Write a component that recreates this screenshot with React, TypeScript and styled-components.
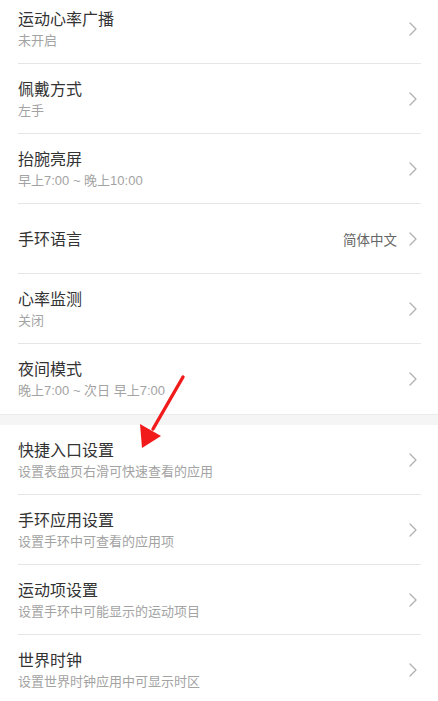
import React from "react";
import styled, { createGlobalStyle } from "styled-components";

const GlobalStyle = createGlobalStyle`
  html, body {
    margin: 0;
    padding: 0;
    background: #ffffff;
  }
  body {
    font-family: "Liberation Sans", "Noto Sans CJK SC", sans-serif;
    -webkit-font-smoothing: antialiased;
  }
`;

const Page = styled.div`
  position: relative;
  width: 438px;
  height: 701px;
  overflow: hidden;
  background: #ffffff;
`;

const List = styled.div`
  display: flex;
  flex-direction: column;
  margin-top: -6px;
`;

const Group = styled.div`
  display: flex;
  flex-direction: column;
`;

const Gap = styled.div`
  height: 10px;
  background: #f5f5f5;
  border-top: 1px solid #ebebeb;
`;

const Row = styled.div<{ $last?: boolean }>`
  display: flex;
  align-items: center;
  height: 70px;
  margin: 0 17px 0 18px;
  box-sizing: border-box;
  border-bottom: ${(p) => (p.$last ? "none" : "1px solid #e6e6e6")};
`;

const Texts = styled.div`
  flex: 1;
  display: flex;
  flex-direction: column;
  padding-top: 1px;
`;

const Title = styled.div`
  font-size: 16px;
  line-height: 21px;
  color: #333333;
`;

const Sub = styled.div`
  font-size: 13px;
  line-height: 19px;
  color: #a3a3a3;
  margin-top: 1px;
`;

const Value = styled.span`
  font-size: 13.5px;
  color: #666666;
  margin-right: 12px;
`;

const Chevron = styled.svg`
  width: 8px;
  height: 14px;
  margin-right: 4px;
  flex-shrink: 0;
`;

const ArrowOverlay = styled.svg`
  position: absolute;
  left: 0;
  top: 0;
  pointer-events: none;
`;

type Item = { title: string; sub?: string; value?: string };

const firstGroup: Item[] = [
  { title: "运动心率广播", sub: "未开启" },
  { title: "佩戴方式", sub: "左手" },
  { title: "抬腕亮屏", sub: "早上7:00 ~ 晚上10:00" },
  { title: "手环语言", value: "简体中文" },
  { title: "心率监测", sub: "关闭" },
  { title: "夜间模式", sub: "晚上7:00 ~ 次日 早上7:00" },
];

const secondGroup: Item[] = [
  { title: "快捷入口设置", sub: "设置表盘页右滑可快速查看的应用" },
  { title: "手环应用设置", sub: "设置手环中可查看的应用项" },
  { title: "运动项设置", sub: "设置手环中可能显示的运动项目" },
  { title: "世界时钟", sub: "设置世界时钟应用中可显示时区" },
];

const Arrow = () => (
  <Chevron viewBox="0 0 8 14">
    <polyline
      points="1,1 7,7 1,13"
      fill="none"
      stroke="#b0b0b0"
      strokeWidth="1.3"
      strokeLinecap="round"
      strokeLinejoin="round"
    />
  </Chevron>
);

const SettingRow = ({ item, last }: { item: Item; last?: boolean }) => (
  <Row $last={last}>
    <Texts>
      <Title>{item.title}</Title>
      {item.sub && <Sub>{item.sub}</Sub>}
    </Texts>
    {item.value && <Value>{item.value}</Value>}
    <Arrow />
  </Row>
);

export default function App() {
  return (
    <Page>
      <GlobalStyle />
      <List>
        <Group>
          {firstGroup.map((it, i) => (
            <SettingRow key={it.title} item={it} last={i === firstGroup.length - 1} />
          ))}
        </Group>
        <Gap />
        <Group>
          {secondGroup.map((it, i) => (
            <SettingRow key={it.title} item={it} last={i === secondGroup.length - 1} />
          ))}
        </Group>
      </List>
      <ArrowOverlay width="438" height="701" viewBox="0 0 438 701">
        <line x1="183" y1="377" x2="153" y2="429" stroke="#f21b1b" strokeWidth="3.4" strokeLinecap="round" />
        <polygon points="142,448 140,424 161,436" fill="#f21b1b" />
      </ArrowOverlay>
    </Page>
  );
}
